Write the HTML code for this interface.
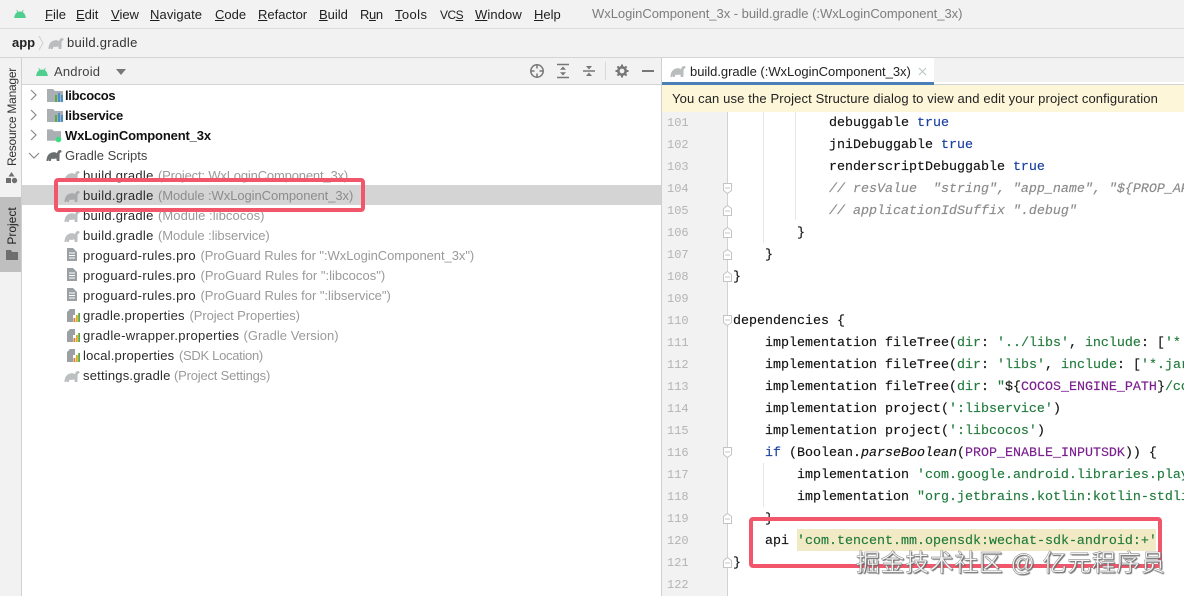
<!DOCTYPE html>
<html><head><meta charset="utf-8">
<style>
html,body{margin:0;padding:0;width:1184px;height:596px;overflow:hidden;background:#fff}
body{position:relative;font-family:"Liberation Sans",sans-serif;font-size:13px;color:#222}
.a{position:absolute}
.t{position:absolute;white-space:pre;line-height:16px}
.m{position:absolute;top:7px;white-space:pre;line-height:16px;font-size:13px;color:#1e1e1e}
.m u{text-decoration:underline}
.r{position:absolute;white-space:pre;line-height:16px;font-size:13px;color:#2b2b2b;letter-spacing:.28px}
.h{position:absolute;white-space:pre;line-height:16px;font-size:13px;color:#9a9a9a}
.r b{color:#111}
.n{position:absolute;left:667px;width:24px;font-family:"Liberation Mono",monospace;font-size:12px;line-height:16px;color:#b4b4b4}
.w{position:absolute;left:662px;top:116px;width:522px;height:480px;overflow:hidden}
.c{position:absolute;white-space:pre;font-family:"Liberation Mono",monospace;font-size:13.33px;line-height:16px;color:#111;left:71px;-webkit-text-stroke:.15px currentColor}
.k{color:#1a3f9e}.s{color:#207a3c}.v{color:#7a1f8e}.g{color:#8a8a8a;font-style:italic}.d{color:#207a3c}
</style></head><body>
<svg width="0" height="0" style="position:absolute"><defs>
<symbol id="gr" viewBox="0 0 16 12"><path d="M0.500 12C0.500 7 3 3.500 7.500 3.200C9 3.100 10 3.600 11 4.300C11.300 2.300 12.800 .8 14.300 1C15.600 1.200 16 2.800 15 3.500C14 3.200 13.600 4.300 13.600 5.500L13.400 12H10.800L10.300 9.400C8.500 10 7 10 5.400 9.600L4.800 12H2.800L2.600 10L2.200 12Z"/></symbol>
<symbol id="an" viewBox="0 0 14 10"><path d="M0.500 10C0.800 6.500 2.600 4.200 4 3.500L3 1.200L3.700 0.800L4.900 3.100C6.200 2.600 7.800 2.600 9.100 3.100L10.300 0.800L11 1.200L10 3.500C11.400 4.200 13.200 6.500 13.500 10Z"/></symbol>
<symbol id="fl" viewBox="0 0 10 13"><path d="M0 0H6L10 4V13H0Z" fill="#9aa0a3"/><path d="M2 5H8M2 7.500H8M2 10H8" stroke="#fff" stroke-width="1"/></symbol>
<symbol id="pr" viewBox="0 0 13 13"><path d="M0 13V3L3 0H8V6H6V13Z" fill="#9aa0a3"/><rect x="6.500" y="9" width="1.800" height="4" fill="#e07a2a"/><rect x="9" y="6" width="1.800" height="7" fill="#d9a92a"/><rect x="11.200" y="4" width="1.800" height="9" fill="#5aa84a"/></symbol>
<symbol id="fo" viewBox="0 0 16 13"><path d="M0 0H6L8 2H16V13H0Z" fill="#a9afb3"/></symbol>
</defs></svg>

<!-- top bars -->
<div class="a" style="left:0;top:0;width:1184px;height:28px;background:#f2f2f2"></div>
<div class="a" style="left:0;top:28px;width:1184px;height:1px;background:#dcdcdc"></div>
<div class="a" style="left:0;top:29px;width:1184px;height:28px;background:#f2f2f2"></div>
<div class="a" style="left:0;top:57px;width:1184px;height:1px;background:#d4d4d4"></div>

<svg class="a" style="left:13px;top:9px;fill:#4fcf8e" width="14" height="9"><use href="#an" width="14" height="9"/></svg>
<span class="m" style="left:45px"><u>F</u>ile</span>
<span class="m" style="left:76px"><u>E</u>dit</span>
<span class="m" style="left:111px"><u>V</u>iew</span>
<span class="m" style="left:150px;letter-spacing:.1px"><u>N</u>avigate</span>
<span class="m" style="left:215px"><u>C</u>ode</span>
<span class="m" style="left:258px"><u>R</u>efactor</span>
<span class="m" style="left:319px"><u>B</u>uild</span>
<span class="m" style="left:360px;letter-spacing:-.4px">R<u>u</u>n</span>
<span class="m" style="left:395px;letter-spacing:.4px"><u>T</u>ools</span>
<span class="m" style="left:440px;font-size:12px;letter-spacing:-.5px">VC<u>S</u></span>
<span class="m" style="left:475px;letter-spacing:.1px"><u>W</u>indow</span>
<span class="m" style="left:534px"><u>H</u>elp</span>
<span class="t" style="left:592px;top:6px;color:#7d7d7d;letter-spacing:-.03px">WxLoginComponent_3x - build.gradle (:WxLoginComponent_3x)</span>

<span class="t" style="left:12px;top:35px;font-weight:bold;color:#222">app</span>
<svg class="a" style="left:38px;top:35px" width="6" height="16" fill="none" stroke="#d0d0d0"><path d="M1 1L5 8L1 15"/></svg>
<svg class="a" style="left:48px;top:37px;fill:#b9bdbd" width="16" height="12"><use href="#gr" width="16" height="12"/></svg>
<span class="t" style="left:67px;top:35px;color:#333;letter-spacing:.28px">build.gradle</span>

<!-- left stripe -->
<div class="a" style="left:0;top:58px;width:21px;height:538px;background:#f2f2f2"></div>
<div class="a" style="left:21px;top:58px;width:1px;height:538px;background:#d0d0d0"></div>
<div class="a" style="left:0;top:197px;width:21px;height:75px;background:#bfbfbf"></div>
<span class="t" style="left:12px;top:117px;transform:translate(-50%,-50%) rotate(-90deg);color:#333;font-size:12px;letter-spacing:-.25px">Resource Manager</span>
<svg class="a" style="left:5px;top:171px" width="13" height="13" fill="#6e6e6e"><path d="M6.500 1L9.500 5.500H3.500Z"/><rect x="1" y="7" width="5" height="5"/><circle cx="9.500" cy="9.500" r="2.700"/></svg>
<span class="t" style="left:12px;top:226px;transform:translate(-50%,-50%) rotate(-90deg);color:#222;font-size:12px">Project</span>
<svg class="a" style="left:6px;top:250px;fill:#6e6e6e" width="12" height="10"><path d="M0 0H5L6 2H12V10H0Z"/></svg>

<!-- project header -->
<div class="a" style="left:22px;top:58px;width:640px;height:26px;background:#f2f2f2"></div>
<div class="a" style="left:22px;top:84px;width:640px;height:1px;background:#d4d4d4"></div>
<svg class="a" style="left:35px;top:67px;fill:#4fcf8e" width="14" height="9"><use href="#an" width="14" height="9"/></svg>
<span class="t" style="left:54px;top:64px;color:#444;letter-spacing:.2px">Android</span>
<svg class="a" style="left:116px;top:69px" width="10" height="6" fill="#777"><path d="M0 0H10L5 6Z"/></svg>
<svg class="a" style="left:529px;top:63px" width="16" height="16" fill="none" stroke="#777" stroke-width="1.500"><circle cx="8" cy="8" r="6.200"/><path d="M8 1.500V5.500M8 10.500V14.500M1.500 8H5.500M10.500 8H14.500"/></svg>
<svg class="a" style="left:556px;top:63px" width="14" height="16" fill="none" stroke="#777" stroke-width="1.500"><path d="M1 1.500H13M1 14.500H13"/><path d="M7 3.500L10 6.800H4Z M7 12.500L4 9.200H10Z" fill="#777" stroke="none"/></svg>
<svg class="a" style="left:582px;top:63px" width="14" height="16" fill="none" stroke="#777" stroke-width="1.500"><path d="M1 8H13"/><path d="M7 6.500L4 3H10Z M7 9.500L10 13H4Z" fill="#777" stroke="none"/></svg>
<div class="a" style="left:605px;top:62px;width:1px;height:18px;background:#d8d8d8"></div>
<svg class="a" style="left:615px;top:64px" width="14" height="14" fill="none" stroke="#777"><circle cx="7" cy="7" r="3.700" stroke-width="2.600"/><path d="M7 .5V3M7 11V13.500M.5 7H3M11 7H13.500M2.400 2.400L4 4M10 10L11.600 11.600M2.400 11.600L4 10M10 4L11.600 2.400" stroke-width="2"/></svg>
<div class="a" style="left:642px;top:70px;width:12px;height:2px;background:#777"></div>

<!-- tree -->
<div class="a" style="left:22px;top:185px;width:640px;height:20px;background:#d4d4d4"></div>
<svg class="a" style="left:28px;top:88px" width="14" height="170" fill="none" stroke="#8a8a8a" stroke-width="1.200"><path d="M3 2L8 7L3 12M3 22L8 27L3 32M3 42L8 47L3 52M1 65L6 70L11 65"/></svg>

<svg class="a" style="left:47px;top:89px" width="16" height="13"><use href="#fo" width="16" height="13"/><rect x="8" y="6" width="2" height="7" fill="#5aa84a"/><rect x="11" y="4" width="2" height="9" fill="#4a90c8"/><rect x="14" y="6" width="2" height="7" fill="#4a90c8"/></svg>
<span class="r" style="left:65px;top:88px;letter-spacing:-.3px"><b>libcocos</b></span>
<svg class="a" style="left:47px;top:109px" width="16" height="13"><use href="#fo" width="16" height="13"/><rect x="8" y="6" width="2" height="7" fill="#5aa84a"/><rect x="11" y="4" width="2" height="9" fill="#4a90c8"/><rect x="14" y="6" width="2" height="7" fill="#4a90c8"/></svg>
<span class="r" style="left:65px;top:108px;letter-spacing:-.2px"><b>libservice</b></span>
<svg class="a" style="left:47px;top:129px" width="16" height="14"><use href="#fo" width="14" height="12"/><circle cx="11.500" cy="10.500" r="2.800" fill="#3ddc84"/></svg>
<span class="r" style="left:65px;top:128px;letter-spacing:-.15px"><b>WxLoginComponent_3x</b></span>
<svg class="a" style="left:46px;top:149px;fill:#6b6f70" width="16" height="12"><use href="#gr" width="16" height="12"/></svg>
<span class="r" style="left:65px;top:148px;color:#444;letter-spacing:0">Gradle Scripts</span>

<svg class="a" style="left:64px;top:170px;fill:#bcc0c0" width="16" height="12"><use href="#gr" width="16" height="12"/></svg>
<span class="r" style="left:83px;top:168px">build.gradle</span><span class="h" style="left:158px;top:168px;letter-spacing:-.17px">(Project: WxLoginComponent_3x)</span>
<svg class="a" style="left:64px;top:190px;fill:#a7abab" width="16" height="12"><use href="#gr" width="16" height="12"/></svg>
<span class="r" style="left:83px;top:188px">build.gradle</span><span class="h" style="left:158px;top:188px;letter-spacing:-.07px;color:#8c8c8c">(Module :WxLoginComponent_3x)</span>
<svg class="a" style="left:64px;top:210px;fill:#bcc0c0" width="16" height="12"><use href="#gr" width="16" height="12"/></svg>
<span class="r" style="left:83px;top:208px">build.gradle</span><span class="h" style="left:158px;top:208px;letter-spacing:.06px">(Module :libcocos)</span>
<svg class="a" style="left:64px;top:230px;fill:#bcc0c0" width="16" height="12"><use href="#gr" width="16" height="12"/></svg>
<span class="r" style="left:83px;top:228px">build.gradle</span><span class="h" style="left:158px;top:228px;letter-spacing:-.05px">(Module :libservice)</span>
<svg class="a" style="left:67px;top:248px" width="10" height="13"><use href="#fl" width="10" height="13"/></svg>
<span class="r" style="left:83px;top:248px;letter-spacing:.33px">proguard-rules.pro</span><span class="h" style="left:200.500px;top:248px;letter-spacing:-.05px">(ProGuard Rules for ":WxLoginComponent_3x")</span>
<svg class="a" style="left:67px;top:268px" width="10" height="13"><use href="#fl" width="10" height="13"/></svg>
<span class="r" style="left:83px;top:268px;letter-spacing:.33px">proguard-rules.pro</span><span class="h" style="left:200.500px;top:268px;letter-spacing:.02px">(ProGuard Rules for ":libcocos")</span>
<svg class="a" style="left:67px;top:288px" width="10" height="13"><use href="#fl" width="10" height="13"/></svg>
<span class="r" style="left:83px;top:288px;letter-spacing:.33px">proguard-rules.pro</span><span class="h" style="left:200.500px;top:288px;letter-spacing:-.03px">(ProGuard Rules for ":libservice")</span>
<svg class="a" style="left:67px;top:309px" width="13" height="13"><use href="#pr" width="13" height="13"/></svg>
<span class="r" style="left:83px;top:308px;letter-spacing:.25px">gradle.properties</span><span class="h" style="left:189.500px;top:308px;letter-spacing:-.08px">(Project Properties)</span>
<svg class="a" style="left:67px;top:329px" width="13" height="13"><use href="#pr" width="13" height="13"/></svg>
<span class="r" style="left:83px;top:328px;letter-spacing:.33px">gradle-wrapper.properties</span><span class="h" style="left:243.500px;top:328px;letter-spacing:.03px">(Gradle Version)</span>
<svg class="a" style="left:67px;top:349px" width="13" height="13"><use href="#pr" width="13" height="13"/></svg>
<span class="r" style="left:83px;top:348px;letter-spacing:.2px">local.properties</span><span class="h" style="left:179px;top:348px;letter-spacing:-.3px">(SDK Location)</span>
<svg class="a" style="left:64px;top:370px;fill:#bcc0c0" width="16" height="12"><use href="#gr" width="16" height="12"/></svg>
<span class="r" style="left:83px;top:368px;letter-spacing:.2px">settings.gradle</span><span class="h" style="left:174px;top:368px;letter-spacing:-.2px">(Project Settings)</span>

<!-- divider & editor -->
<div class="a" style="left:661px;top:58px;width:1px;height:538px;background:#d0d0d0"></div>
<div class="a" style="left:662px;top:58px;width:522px;height:24px;background:#f2f2f2"></div>
<div class="a" style="left:662px;top:58px;width:272px;height:24px;background:#fff"></div>
<div class="a" style="left:662px;top:82px;width:272px;height:3px;background:#4a7fb5"></div>
<div class="a" style="left:934px;top:84px;width:250px;height:1px;background:#d4d4d4"></div>
<svg class="a" style="left:670px;top:65px;fill:#b9bdbd" width="16" height="12"><use href="#gr" width="16" height="12"/></svg>
<span class="t" style="left:690px;top:64px;color:#222;letter-spacing:-.03px">build.gradle (:WxLoginComponent_3x)</span>
<svg class="a" style="left:918px;top:67px" width="9" height="9" stroke="#b8c4c8" fill="none"><path d="M1 1L8 8M8 1L1 8"/></svg>

<div class="a" style="left:662px;top:85px;width:522px;height:27px;background:#fdf6d9"></div>
<span class="t" style="left:672px;top:91px;color:#222;letter-spacing:.13px">You can use the Project Structure dialog to view and edit your project configuration</span>

<div class="a" style="left:662px;top:112px;width:65px;height:484px;background:#f2f2f2"></div>
<div class="a" style="left:727px;top:112px;width:1px;height:484px;background:#d2d2d2"></div>

<div class="a" style="left:763px;top:112px;width:1px;height:131px;background:#e8e8e8"></div>
<div class="a" style="left:795px;top:112px;width:1px;height:108px;background:#e8e8e8"></div>
<div class="a" style="left:763px;top:463px;width:1px;height:44px;background:#e8e8e8"></div>

<svg class="a" style="left:722px;top:112px" width="12" height="484" fill="#fff" stroke="#c4c4c4">
<path d="M1.500 71.500H9.500V78.500L5.500 81.500L1.500 78.500Z M3 76H8"/>
<path transform="translate(0,-7)" d="M1.500 103.500L5.500 100.500L9.500 103.500V110.500H1.500Z M3 106H8"/>
<path transform="translate(0,-7)" d="M1.500 125.500L5.500 122.500L9.500 125.500V132.500H1.500Z M3 128H8"/>
<path transform="translate(0,-7)" d="M1.500 147.500L5.500 144.500L9.500 147.500V154.500H1.500Z M3 150H8"/>
<path transform="translate(0,-7)" d="M1.500 169.500L5.500 166.500L9.500 169.500V176.500H1.500Z M3 172H8"/>
<path d="M1.500 203.500H9.500V210.500L5.500 213.500L1.500 210.500Z M3 208H8"/>
<path d="M1.500 335.500H9.500V342.500L5.500 345.500L1.500 342.500Z M3 340H8"/>
<path transform="translate(0,3)" d="M1.500 401.500L5.500 398.500L9.500 401.500V408.500H1.500Z M3 404H8"/>
<path transform="translate(0,3)" d="M1.500 445.500L5.500 442.500L9.500 445.500V452.500H1.500Z M3 448H8"/>
</svg>

<div class="n" style="top:115px">101</div><div class="n" style="top:137px">102</div><div class="n" style="top:159px">103</div><div class="n" style="top:181px">104</div><div class="n" style="top:203px">105</div><div class="n" style="top:225px">106</div><div class="n" style="top:247px">107</div><div class="n" style="top:269px">108</div><div class="n" style="top:291px">109</div><div class="n" style="top:313px">110</div><div class="n" style="top:335px">111</div><div class="n" style="top:357px">112</div><div class="n" style="top:379px">113</div><div class="n" style="top:401px">114</div><div class="n" style="top:423px">115</div><div class="n" style="top:445px">116</div><div class="n" style="top:467px">117</div><div class="n" style="top:489px">118</div><div class="n" style="top:511px">119</div><div class="n" style="top:533px">120</div><div class="n" style="top:555px">121</div><div class="n" style="top:577px">122</div>

<div class="a" style="left:797px;top:529px;width:359px;height:22px;background:#f1eac4"></div>

<div class="w">
<div class="c" style="top:0px">            debuggable <span class="k">true</span></div>
<div class="c" style="top:22px">            jniDebuggable <span class="k">true</span></div>
<div class="c" style="top:44px">            renderscriptDebuggable <span class="k">true</span></div>
<div class="c g" style="top:66px">            // resValue  "string", "app_name", "${PROP_AP</div>
<div class="c g" style="top:88px">            // applicationIdSuffix ".debug"</div>
<div class="c" style="top:110px">        }</div>
<div class="c" style="top:132px">    }</div>
<div class="c" style="top:154px">}</div>
<div class="c" style="top:198px">dependencies {</div>
<div class="c" style="top:220px">    implementation fileTree(<span class="d">dir</span>: <span class="s">'../libs'</span>, <span class="d">include</span>: [<span class="s">'*.</span></div>
<div class="c" style="top:242px">    implementation fileTree(<span class="d">dir</span>: <span class="s">'libs'</span>, <span class="d">include</span>: [<span class="s">'*.jar</span></div>
<div class="c" style="top:264px">    implementation fileTree(<span class="d">dir</span>: <span class="s">"</span>${<span class="v">COCOS_ENGINE_PATH</span>}<span class="s">/coc</span></div>
<div class="c" style="top:286px">    implementation project(<span class="s">':libservice'</span>)</div>
<div class="c" style="top:308px">    implementation project(<span class="s">':libcocos'</span>)</div>
<div class="c" style="top:330px">    <span class="k">if</span> (Boolean.<i>parseBoolean</i>(<span class="v">PROP_ENABLE_INPUTSDK</span>)) {</div>
<div class="c" style="top:352px">        implementation <span class="s">'com.google.android.libraries.play</span></div>
<div class="c" style="top:374px">        implementation <span class="s">"org.jetbrains.kotlin:kotlin-stdli</span></div>
<div class="c" style="top:396px">    }</div>
<div class="c" style="top:418px">    api <span class="s">'com.tencent.mm.opensdk:wechat-sdk-android:+'</span></div>
<div class="c" style="top:440px">}</div>
</div>

<!-- annotations -->
<div class="a" style="left:54px;top:178px;width:303px;height:26px;border:4px solid #f2566b;border-radius:4px"></div>
<div class="a" style="left:749px;top:517px;width:405px;height:43px;border:4px solid #f2566b;border-radius:4px"></div>

<span class="t" style="left:856px;top:551px;font-family:'Liberation Sans','Noto Sans CJK SC',sans-serif;font-size:24px;line-height:26px;color:#f4f4f4;letter-spacing:.55px;-webkit-text-stroke:.4px #777;text-shadow:1px 1px 1px #666">掘金技术社区 @ 亿元程序员</span>
</body></html>
